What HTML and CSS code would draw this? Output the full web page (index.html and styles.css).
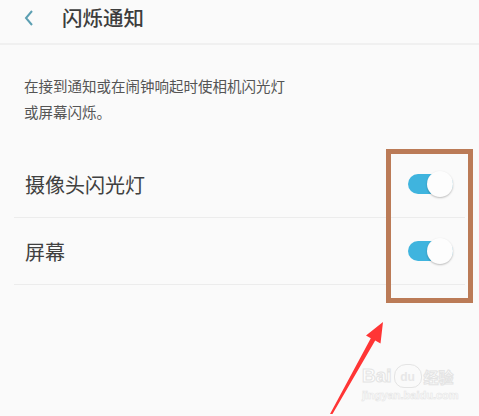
FILE: index.html
```html
<!DOCTYPE html>
<html lang="zh-CN">
<head>
  <meta charset="UTF-8">
  <meta name="viewport" content="width=device-width, initial-scale=1.0">
  <title>闪烁通知</title>
  <link rel="stylesheet" href="styles.css">
</head>
<body>

  <!-- Header -->
  <div class="header">
    <svg class="back" width="12" height="18" viewBox="0 0 12 18">
      <polyline points="9,2 3,9 9,16" fill="none" stroke="#5c9fb2" stroke-width="2"/>
    </svg>
    <h1>闪烁通知</h1>
  </div>

  <!-- Description -->
  <p class="desc">在接到通知或在闹钟响起时使相机闪光灯<br>或屏幕闪烁。</p>

  <!-- Settings list -->
  <div class="list">
    <div class="row">
      <span>摄像头闪光灯</span>
      <div class="switch on"><div class="knob"></div></div>
    </div>
    <div class="row">
      <span>屏幕</span>
      <div class="switch on"><div class="knob"></div></div>
    </div>
  </div>

  <!-- Annotation: highlight box and arrow -->
  <div class="mark-box"></div>
  <svg class="arrow" width="479" height="416" viewBox="0 0 479 416">
    <polygon points="330,414 370.8,338.2 366,335.4 383,322 380.5,343.4 375.2,340.6 332.5,414" fill="#ff3535"/>
  </svg>

  <!-- Watermark -->
  <div class="watermark">
    <div class="wm-top">
      <span class="wm-bai">Bai</span>
      <span class="wm-paw">du</span>
      <span class="wm-jy">经验</span>
    </div>
    <div class="wm-url">jingyan.baidu.com</div>
  </div>

</body>
</html>
```

FILE: styles.css
```css
/* Reset */
* {
  margin: 0;
  padding: 0;
  box-sizing: border-box;
  font-family: "Noto Sans CJK SC", "Noto Sans", sans-serif;
}

body {
  width: 479px;
  height: 416px;
  overflow: hidden;
  background-color: #fafafa;
  color: #3a3a3a;
  position: relative;
}

/* Header */
.header {
  height: 45px;
  display: flex;
  align-items: center;
  padding-left: 23px;
  padding-bottom: 8px;
  border-bottom: 2px solid #f0f0f0;
}
.header .back {
  margin-right: 27px;
}
.header h1 {
  font-size: 20.5px;
  font-weight: 500;
  color: #3d3d3d;
  line-height: 1;
}

/* Description */
.desc {
  padding: 28px 0 26px 24px;
  font-size: 14.5px;
  line-height: 26px;
  color: #555;
}

/* List rows */
.list {
  padding: 0 14px;
}
.row {
  height: 67px;
  display: flex;
  align-items: center;
  justify-content: space-between;
  padding: 0 12px 0 11px;
  border-bottom: 1px solid #ececec;
  font-size: 20px;
  color: #404040;
}

/* Toggle switch */
.switch {
  position: relative;
  width: 45px;
  height: 20px;
  border-radius: 10px;
  background-color: #dcdcdc;
}
.switch.on {
  background-color: #3fb4de;
}
.switch .knob {
  position: absolute;
  right: 0;
  top: -3px;
  width: 26px;
  height: 26px;
  border-radius: 50%;
  background-color: #fdfdfd;
  box-shadow: 0 1px 2px rgba(0, 0, 0, 0.25);
}

/* Annotation overlay */
.mark-box {
  position: absolute;
  left: 386px;
  top: 149px;
  width: 87px;
  height: 154px;
  border: 5px solid #bb7b57;
}
.arrow {
  position: absolute;
  left: 0;
  top: 0;
}

/* Watermark */
.watermark {
  position: absolute;
  left: 362px;
  top: 364px;
  color: #fff;
  opacity: 0.9;
}
.wm-top {
  display: flex;
  align-items: center;
  gap: 2px;
}
.wm-bai {
  font-family: "Liberation Sans", sans-serif;
  font-size: 19px;
  font-weight: bold;
  -webkit-text-stroke: 1px #e2e2e2;
}
.wm-paw {
  display: inline-block;
  width: 28px;
  height: 24px;
  border: 1px solid #e2e2e2;
  border-radius: 12px 12px 10px 10px;
  font-family: "Liberation Sans", sans-serif;
  font-size: 12px;
  font-weight: bold;
  text-align: center;
  line-height: 24px;
  color: #e6e6e6;
}
.wm-jy {
  font-size: 15px;
  font-weight: bold;
  -webkit-text-stroke: 1px #e2e2e2;
}
.wm-url {
  font-family: "Liberation Sans", sans-serif;
  font-size: 11px;
  font-weight: bold;
  -webkit-text-stroke: 0.6px #e4e4e4;
  margin-top: 1px;
}
```
